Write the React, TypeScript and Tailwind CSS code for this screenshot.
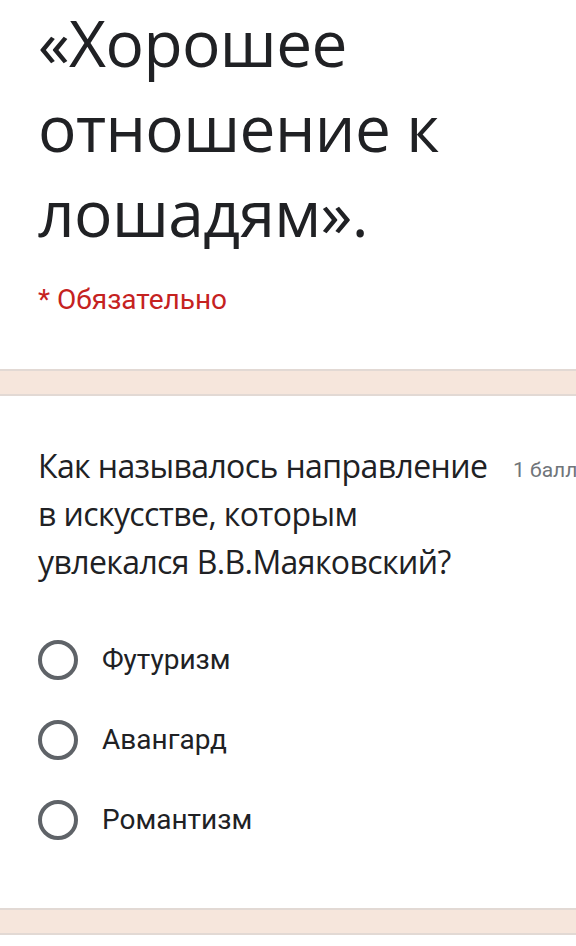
export default function App() {
  const options = ["Футуризм", "Авангард", "Романтизм"]

  return (
    <div className="w-[576px] h-[946px] overflow-hidden bg-white font-['Roboto',sans-serif] text-[#202124]">
      {/* Form header */}
      <div className="pl-[38px] pb-[53px]">
        <h1 className="font-['Open_Sans',sans-serif] text-[64px] leading-[85px] font-normal tracking-[-0.6px] text-[#202124]">
          «Хорошее отношение к лошадям».
        </h1>
        <p className="mt-[29px] text-[28px] leading-[32px] text-[#c5221f]">* Обязательно</p>
      </div>

      <div className="h-[27px] border-y-2 border-[#e2d9d4] bg-[#f6e6dc]" />

      {/* Question card */}
      <div className="pl-[38px] pt-[46px] pb-[68px]">
        <div className="flex items-start gap-[13px] whitespace-nowrap">
          <p className="w-[462px] shrink-0 whitespace-normal font-['Open_Sans',sans-serif] text-[32px] leading-[48px] tracking-[-0.6px] text-[#202124]">
            Как называлось направление в искусстве, которым увлекался В.В.Маяковский?
          </p>
          <span className="pt-[16px] text-[21px] leading-[24px] text-[#70757a]">1 балл</span>
        </div>

        <div className="mt-[54px] flex flex-col gap-[40px]">
          {options.map((o) => (
            <label key={o} className="flex items-center gap-[24px]">
              <span className="h-[40px] w-[40px] rounded-full border-[4px] border-[#5f6368]" />
              <span className="text-[28px] leading-[40px] text-[#202124]">{o}</span>
            </label>
          ))}
        </div>
      </div>

      <div className="h-[27px] border-y-2 border-[#e2d9d4] bg-[#f6e6dc]" />
    </div>
  )
}
